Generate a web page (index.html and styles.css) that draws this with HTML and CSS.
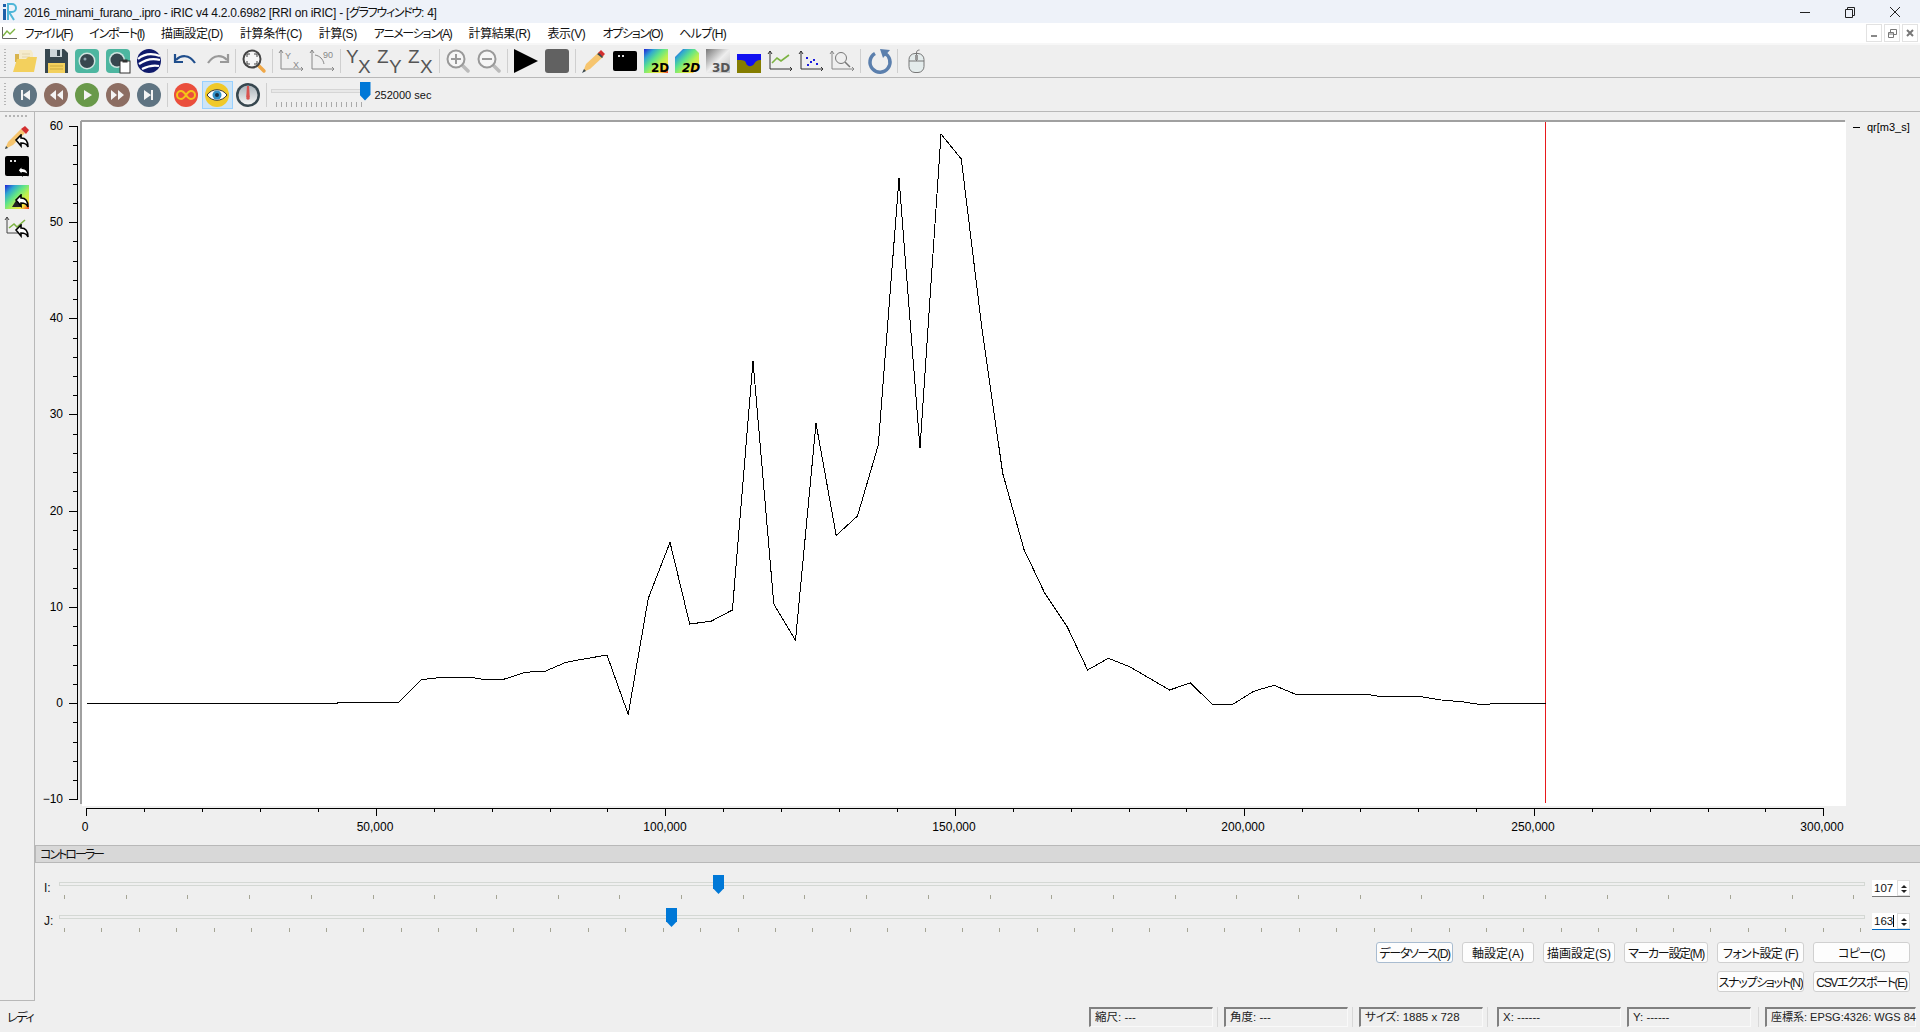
FILE: index.html
```html
<!DOCTYPE html>
<html lang="ja">
<head>
<meta charset="UTF-8">
<title>2016_minami_furano_.ipro - iRIC v4 4.2.0.6982</title>
<link rel="stylesheet" href="styles.css">
</head>
<body>

<svg class="defs" width="0" height="0">
  <symbol id="back" viewBox="0 0 14 14">
    <path d="M1 6 6 1v3c4 0 7 2 7 9-1-3-3-4-7-4v3z" fill="#fff" stroke="#000" stroke-width="1.6"/>
  </symbol>
  <symbol id="glass" viewBox="0 0 24 24">
    <path d="M15 15 22 22" stroke="#bbb" stroke-width="3.5" stroke-linecap="round"/>
    <circle cx="10" cy="10" r="8.5" fill="#f6f6f6" stroke="#999" stroke-width="2"/>
  </symbol>
</svg>

<div class="titlebar">
  <svg class="logo" width="16" height="18" viewBox="0 0 16 18">
    <rect x="1" y="1" width="3" height="3" fill="#1c5fa8"/>
    <rect x="1" y="6" width="3" height="11" fill="#1c5fa8"/>
    <path d="M6 17V1h4a3.500 3.500 0 0 1 0 8H7l5 8" fill="none" stroke="#4fb6d8" stroke-width="2"/>
  </svg>
  <span class="title-text">2016_minami_furano_.ipro - iRIC v4 4.2.0.6982 [RRI on iRIC] - [<span class="kana">グラフウィンドウ</span>: 4]</span>
  <div class="winbtns">
    <svg width="12" height="12" viewBox="0 0 12 12"><path d="M1 6.500H11" stroke="#222"/></svg>
    <svg width="12" height="12" viewBox="0 0 12 12"><path d="M1.500 3.500h7v8h-7zM3.500 3.500v-2h7v8h-2" fill="none" stroke="#222"/></svg>
    <svg width="12" height="12" viewBox="0 0 12 12"><path d="M1 1 11 11M11 1 1 11" stroke="#222"/></svg>
  </div>
</div>

<div class="menubar">
  <svg class="menu-icon" width="16" height="14" viewBox="0 0 16 14">
    <path d="M1.500 1V12.500H16" fill="none" stroke="#666"/>
    <path d="M2 10 6 5l3 3 5-5" fill="none" stroke="#7cb342" stroke-width="1.400"/>
  </svg>
  <span class="menu-item kana">ファイル(F)</span>
  <span class="menu-item kana">インポート(I)</span>
  <span class="menu-item">描画設定(D)</span>
  <span class="menu-item">計算条件(C)</span>
  <span class="menu-item">計算(S)</span>
  <span class="menu-item kana">アニメーション(A)</span>
  <span class="menu-item">計算結果(R)</span>
  <span class="menu-item">表示(V)</span>
  <span class="menu-item kana">オプション(O)</span>
  <span class="menu-item kana-light">ヘルプ(H)</span>
  <div class="mdibtns">
    <span class="mdi"><svg width="8" height="8" viewBox="0 0 8 8"><rect x="1" y="6" width="6" height="2" fill="#888"/></svg></span>
    <span class="mdi"><svg width="9" height="9" viewBox="0 0 9 9"><path d="M.5 3.500h5v5h-5zM2.500 3V.5h6v5H6M.5 5h5" fill="none" stroke="#777"/></svg></span>
    <span class="mdi"><svg width="8" height="8" viewBox="0 0 8 8"><path d="M1 1 7 7M7 1 1 7" stroke="#777" stroke-width="2"/></svg></span>
  </div>
</div>

<div class="toolbar">
  <span class="grip"></span>
  <span class="ic"><svg width="24" height="24" viewBox="0 0 24 24">
    <path d="M2 5h6l2 2h8v6H2z" fill="#d8b44e"/>
    <path d="M6 1h12l2 3v10H6z" fill="#f5ebcb"/>
    <path d="M9 5h8M9 8h8" stroke="#e2d5ab"/>
    <path d="M4 10h9l2-2h9l-3 15H0z" fill="#f3d05d"/>
  </svg></span>
  <span class="ic"><svg width="24" height="24" viewBox="0 0 24 24">
    <path d="M1 0h19l4 4v20H1z" fill="#37474f"/>
    <rect x="6" y="0" width="12" height="8" fill="#cfd8dc"/>
    <rect x="13" y="1" width="3" height="6" fill="#37474f"/>
    <rect x="4" y="14" width="17" height="10" fill="#f3d05d"/>
    <path d="M6 17h13M6 20h13" stroke="#caa93f"/>
  </svg></span>
  <span class="ic"><svg width="24" height="24" viewBox="0 0 24 24">
    <rect width="24" height="24" rx="4" fill="#4db6a0"/>
    <circle cx="12" cy="12" r="8.500" fill="#cfe4e0"/>
    <circle cx="12" cy="12" r="7" fill="#37474f"/>
    <circle cx="10" cy="10" r="1.500" fill="#90a4ae"/>
  </svg></span>
  <span class="ic"><svg width="24" height="24" viewBox="0 0 24 24">
    <rect width="24" height="24" rx="4" fill="#4db6a0"/>
    <circle cx="11" cy="11" r="8" fill="#cfe4e0"/>
    <circle cx="11" cy="11" r="6.500" fill="#37474f"/>
    <rect x="14" y="12" width="10" height="12" fill="#fff" stroke="#333"/>
    <rect x="16.500" y="10.500" width="5" height="3" fill="#333"/>
  </svg></span>
  <span class="ic"><svg width="24" height="24" viewBox="0 0 24 24">
    <circle cx="12" cy="12" r="12" fill="#0f1a6b"/>
    <path d="M1 10C7 5 15 4 23 7M2 15c7-5 14-6 21-4M5 20c6-3 12-4 17-3" fill="none" stroke="#fff" stroke-width="2.200"/>
  </svg></span>
  <span class="sep"></span>
  <span class="ic"><svg width="24" height="24" viewBox="0 0 24 24">
    <path d="M2 11C7 6 15 5 21 14" fill="none" stroke="#1f4e8c" stroke-width="2.200"/>
    <path d="M1 5v8h8" fill="none" stroke="#1f4e8c" stroke-width="2.200"/>
  </svg></span>
  <span class="ic"><svg width="24" height="24" viewBox="0 0 24 24">
    <path d="M22 11C17 6 9 5 3 14" fill="none" stroke="#999" stroke-width="2.200"/>
    <path d="M23 5v8h-8" fill="none" stroke="#999" stroke-width="2.200"/>
  </svg></span>
  <span class="sep"></span>
  <span class="ic"><svg width="24" height="24" viewBox="0 0 24 24">
    <path d="M16 16 22 22" stroke="#f0a848" stroke-width="3.500" stroke-linecap="round"/>
    <circle cx="10" cy="10" r="8.500" fill="#f6f6f6" stroke="#444" stroke-width="2"/>
    <path d="M5 8V5h3M12 5h3v3M15 12v3h-3M8 15H5v-3" fill="none" stroke="#444"/>
  </svg></span>
  <span class="sep"></span>
  <span class="ic"><svg width="26" height="24" viewBox="0 0 26 24">
    <path d="M3 1V20H25M1 4 3 1 5 4M23 18l2 2-2 2" fill="none" stroke="#888"/>
    <text x="7" y="10" class="ico-small">Y</text><text x="15" y="19" class="ico-small">X</text>
  </svg></span>
  <span class="ic"><svg width="26" height="24" viewBox="0 0 26 24">
    <path d="M3 1V20H25M1 4 3 1 5 4M23 18l2 2-2 2" fill="none" stroke="#888"/>
    <path d="M6 6c5 1 8 4 9 9" fill="none" stroke="#888"/>
    <text x="14" y="9" class="ico-small">90</text>
  </svg></span>
  <span class="sep"></span>
  <span class="ic"><svg width="26" height="24" viewBox="0 0 26 24"><text x="0" y="14" class="ico-axis">Y</text><text x="12" y="24" class="ico-axis">X</text></svg></span>
  <span class="ic"><svg width="26" height="24" viewBox="0 0 26 24"><text x="0" y="14" class="ico-axis">Z</text><text x="12" y="24" class="ico-axis">Y</text></svg></span>
  <span class="ic"><svg width="26" height="24" viewBox="0 0 26 24"><text x="0" y="14" class="ico-axis">Z</text><text x="12" y="24" class="ico-axis">X</text></svg></span>
  <span class="sep"></span>
  <span class="ic"><svg width="24" height="24"><use href="#glass"/><path d="M5 10h10M10 5v10" stroke="#999" stroke-width="2"/></svg></span>
  <span class="ic"><svg width="24" height="24"><use href="#glass"/><path d="M5 10h10" stroke="#999" stroke-width="2"/></svg></span>
  <span class="sep"></span>
  <span class="ic"><svg width="24" height="24" viewBox="0 0 24 24"><path d="M0 0 24 12 0 24z" fill="#000"/></svg></span>
  <span class="ic"><svg width="24" height="24" viewBox="0 0 24 24"><rect width="24" height="24" rx="3" fill="#616161"/></svg></span>
  <span class="sep"></span>
  <span class="ic"><svg width="24" height="24" viewBox="0 0 24 24">
    <path d="M1 23 4 15 17 3l5 4L8 20z" fill="#f6c56f"/>
    <path d="M16 4l3-3 4 4-3 3z" fill="#d32f2f"/>
    <path d="M15 5l2-1 4 4-1 1z" fill="#37474f"/>
    <path d="M0 24l2-4 2 2z" fill="#37474f"/>
  </svg></span>
  <span class="ic"><svg width="24" height="20" viewBox="0 0 24 20">
    <rect width="24" height="20" rx="2" fill="#000"/>
    <rect x="5" y="4" width="2" height="2" fill="#ddd"/><rect x="9" y="4" width="2" height="2" fill="#ddd"/>
  </svg></span>
  <span class="ic"><svg width="24" height="24" viewBox="0 0 24 24">
    <defs><linearGradient id="cmap" x1="0" y1="0" x2="1" y2="1">
      <stop offset="0" stop-color="#2020d8"/><stop offset=".22" stop-color="#30a8d0"/><stop offset=".42" stop-color="#60e488"/><stop offset=".62" stop-color="#b8f050"/><stop offset=".82" stop-color="#f8e040"/><stop offset="1" stop-color="#f03020"/>
    </linearGradient></defs>
    <rect width="24" height="24" fill="url(#cmap)"/>
    <text x="7" y="23" class="ico-2d">2D</text>
  </svg></span>
  <span class="ic"><svg width="24" height="24" viewBox="0 0 24 24">
    <path d="M8 0H20L24 4V18L18 24H0V8z" fill="url(#cmap)"/>
    <text x="7" y="23" class="ico-2d ico-ital">2D</text>
  </svg></span>
  <span class="ic"><svg width="24" height="24" viewBox="0 0 24 24">
    <defs><linearGradient id="gray3d" x1="0" y1="0" x2="1" y2="1">
      <stop offset="0" stop-color="#777"/><stop offset=".5" stop-color="#eee"/><stop offset="1" stop-color="#bbb"/>
    </linearGradient></defs>
    <rect width="24" height="24" fill="url(#gray3d)"/>
    <text x="6" y="23" class="ico-2d ico-gray">3D</text>
  </svg></span>
  <span class="ic"><svg width="24" height="24" viewBox="0 0 24 24">
    <rect y="5" width="24" height="19" fill="#857d00"/>
    <path d="M0 5H24V11C20 11 19 12 17 15c-2 3-7 3-8-1C8 11 6 11 0 11z" fill="#1010f0"/>
  </svg></span>
  <span class="ic"><svg width="24" height="24" viewBox="0 0 24 24">
    <path d="M2 2V20H24M0 5 2 2 4 5M22 18l2 2-2 2" fill="none" stroke="#333"/>
    <path d="M4 14 9 9l4 3 8-6" fill="none" stroke="#7cb342" stroke-width="1.600"/>
  </svg></span>
  <span class="ic"><svg width="24" height="24" viewBox="0 0 24 24">
    <path d="M2 2V20H24M0 5 2 2 4 5M22 18l2 2-2 2" fill="none" stroke="#333"/>
    <path d="M7 8h2v2H7zM11 12h2v2h-2zM14 10h2v2h-2zM17 14h2v2h-2zM8 15h2v2H8z" fill="#1a1ae0"/>
  </svg></span>
  <span class="ic"><svg width="24" height="24" viewBox="0 0 24 24">
    <path d="M2 2V20H24M0 5 2 2 4 5M22 18l2 2-2 2" fill="none" stroke="#888"/>
    <circle cx="11" cy="9" r="5.500" fill="none" stroke="#777"/>
    <path d="M15 13l5 5" stroke="#777" stroke-width="1.500"/>
  </svg></span>
  <span class="sep"></span>
  <span class="ic"><svg width="24" height="24" viewBox="0 0 24 24">
    <path d="M8 4.500A10 10 0 1 0 17 4" fill="none" stroke="#5b7fad" stroke-width="3.500"/>
    <path d="M13 0 23 1 16 9z" fill="#5b7fad"/>
  </svg></span>
  <span class="sep"></span>
  <span class="ic"><svg width="24" height="24" viewBox="0 0 24 24">
    <rect x="5" y="4.500" width="15" height="19" rx="6" fill="#e4ecec" stroke="#777"/>
    <path d="M5 12H20M12.500 4.500V12" stroke="#777"/>
    <rect x="11" y="6" width="3" height="5" fill="#999"/>
    <path d="M12.500 4c0-2 1-3 3-3" fill="none" stroke="#777"/>
  </svg></span>
</div>

<div class="toolbar toolbar-play">
  <span class="grip"></span>
  <span class="ic"><svg width="24" height="24" viewBox="0 0 24 24"><circle cx="12" cy="12" r="12" fill="#5f7482"/><path d="M8 7h2v10H8zM17 7v10l-7-5z" fill="#f4f4f4"/></svg></span>
  <span class="ic"><svg width="24" height="24" viewBox="0 0 24 24"><circle cx="12" cy="12" r="12" fill="#8d6e63"/><path d="M12 7v10l-6-5zM19 7v10l-6-5z" fill="#f4f4f4"/></svg></span>
  <span class="ic"><svg width="24" height="24" viewBox="0 0 24 24"><circle cx="12" cy="12" r="12" fill="#69994a"/><path d="M9 7 17 12 9 17z" fill="#f4f4f4"/></svg></span>
  <span class="ic"><svg width="24" height="24" viewBox="0 0 24 24"><circle cx="12" cy="12" r="12" fill="#8d6e63"/><path d="M5 7v10l6-5zM12 7v10l6-5z" fill="#f4f4f4"/></svg></span>
  <span class="ic"><svg width="24" height="24" viewBox="0 0 24 24"><circle cx="12" cy="12" r="12" fill="#5f7482"/><path d="M14 7h2v10h-2zM7 7v10l7-5z" fill="#f4f4f4"/></svg></span>
  <span class="sep"></span>
  <span class="ic"><svg width="24" height="24" viewBox="0 0 24 24"><circle cx="12" cy="12" r="12" fill="#ea4e3c"/><path d="M12 12c-2-3-3.500-4-5-4a4 4 0 0 0 0 8c1.500 0 3-1 5-4s3.500-4 5-4a4 4 0 0 1 0 8c-1.500 0-3-1-5-4z" fill="none" stroke="#f5c518" stroke-width="2"/></svg></span>
  <span class="ic ic-on"><svg width="24" height="24" viewBox="0 0 24 24"><circle cx="12" cy="12" r="12" fill="#f0c929"/><path d="M2 12c5-7 15-7 20 0-5 7-15 7-20 0z" fill="#fff" stroke="#333"/><circle cx="12" cy="12" r="4.500" fill="#2f8fc8"/><circle cx="12" cy="12" r="2" fill="#15324a"/></svg></span>
  <span class="ic"><svg width="24" height="24" viewBox="0 0 24 24">
    <defs><linearGradient id="face" x1="0" y1="0" x2="0" y2="1"><stop offset="0" stop-color="#aab4ba"/><stop offset="1" stop-color="#f5f5f5"/></linearGradient></defs>
    <circle cx="12" cy="12" r="12" fill="#37474f"/><circle cx="12" cy="12" r="9.500" fill="url(#face)"/>
    <path d="M11 3h2l.8 11h-3.600z" fill="#d9534f"/><circle cx="12" cy="15" r="1.800" fill="#d9534f"/>
  </svg></span>
  <span class="sep"></span>
  <div class="time-slider">
    <span class="time-groove"></span>
    <span class="time-ticks"></span>
    <span class="handle handle-time"></span>
  </div>
  <span class="time-text">252000 sec</span>
</div>

<div class="main">
  <div class="dock">
    <span class="dock-grip"></span>
    <span class="dock-ic"><svg width="24" height="24" viewBox="0 0 24 24">
      <path d="M0 24 3 17 16 4l4 4L8 20z" fill="#f6c56f"/><path d="M16 4l4-3 4 4-3 4z" fill="#d32f2f"/><path d="M0 24l1-3 2 2z" fill="#37474f"/>
      <use href="#back" x="10" y="9" width="14" height="14"/>
    </svg></span>
    <span class="dock-ic"><svg width="24" height="22" viewBox="0 0 24 22">
      <rect width="24" height="20" rx="2" fill="#000"/><rect x="5" y="4" width="2" height="2" fill="#ddd"/><rect x="9" y="4" width="2" height="2" fill="#ddd"/>
      <use href="#back" x="12" y="9" width="12" height="12"/>
    </svg></span>
    <span class="dock-ic"><svg width="24" height="24" viewBox="0 0 24 24">
      <rect width="24" height="24" fill="url(#cmap)"/>
      <path d="M7 22 12 14l5 8z" fill="#222"/>
      <use href="#back" x="10" y="9" width="14" height="14"/>
    </svg></span>
    <span class="dock-ic"><svg width="24" height="22" viewBox="0 0 24 22">
      <path d="M2 1V17H16M0 4 2 1 4 4" fill="none" stroke="#444"/><path d="M4 12 9 8l3 3 8-7" fill="none" stroke="#7cb342" stroke-width="1.600"/>
      <use href="#back" x="10" y="8" width="14" height="14"/>
    </svg></span>
  </div>

  <div class="content">
    <svg class="chart" width="1885" height="733" viewBox="35 112 1885 733">
      <rect x="82" y="122" width="1764" height="684" fill="#fff"/>
      <g shape-rendering="crispEdges" fill="none">
        <path d="M81 120.500V804M81 121H1845" stroke="#a0a0a0" stroke-width="2"/>
        <!-- y axis -->
        <path d="M77.500 126V799.500M69 126H77M69 222H77M69 318H77M69 414H77M69 511H77M69 607H77M69 703H77M69 799H77" stroke="#000"/>
        <path d="M73 145H77M73 164H77M73 184H77M73 203H77M73 241H77M73 261H77M73 280H77M73 299H77M73 338H77M73 357H77M73 376H77M73 395H77M73 434H77M73 453H77M73 472H77M73 491H77M73 530H77M73 549H77M73 568H77M73 588H77M73 626H77M73 645H77M73 665H77M73 684H77M73 722H77M73 742H77M73 761H77M73 780H77" stroke="#000"/>
        <!-- x axis -->
        <path d="M86 808.500H1824M86.500 808V816M376.500 808V816M665.500 808V816M955.500 808V816M1244.500 808V816M1534.500 808V816M1823.500 808V816" stroke="#000"/>
        <path d="M144.500 808V812M202.500 808V812M260.500 808V812M318.500 808V812M434.500 808V812M492.500 808V812M550.500 808V812M607.500 808V812M723.500 808V812M781.500 808V812M839.500 808V812M897.500 808V812M1013.500 808V812M1071.500 808V812M1129.500 808V812M1186.500 808V812M1302.500 808V812M1360.500 808V812M1418.500 808V812M1476.500 808V812M1592.500 808V812M1650.500 808V812M1708.500 808V812M1765.500 808V812" stroke="#000"/>
        <path d="M1545.500 122V803" stroke="#e8191c"/>
        <path d="M1853 127.500H1860" stroke="#000"/>
        <polyline stroke="#000" points="86.500,703.300 337.500,703.300 337.500,702.300 398.800,702.300 421.200,679.700 441.600,677.300 471.400,677.300 482.400,679.300 503.700,679.300 525.300,672.300 545.700,671 566,662.300 578.400,660 607,655 628.200,714.300 648.300,598.300 670,542.300 689.700,624 711,621.300 732.400,610 753,361 773.800,604 795.500,640.300 816,423.300 836.200,535.500 857.500,516 878.300,445 899,178.300 920,448.300 941,134 961.300,159 981.700,326.700 1002.700,473.300 1024,549.500 1044.800,593.300 1067.200,626.700 1087.600,670 1108.300,658.300 1129.600,666.700 1169.500,690 1190.400,683 1212.300,704.300 1232.200,704.700 1253.700,691.300 1274,685.300 1295.500,694.300 1367.400,694.300 1378.700,696.300 1419,696.300 1441.400,700 1461.800,701.700 1483.300,705 1494.500,703.300 1545.500,703.300"/>
      </g>
      <g class="ylabels">
        <text x="63" y="130">60</text>
        <text x="63" y="226">50</text>
        <text x="63" y="322">40</text>
        <text x="63" y="418">30</text>
        <text x="63" y="515">20</text>
        <text x="63" y="611">10</text>
        <text x="63" y="707">0</text>
        <text x="63" y="803">−10</text>
      </g>
      <g class="xlabels">
        <text x="85" y="831">0</text>
        <text x="375" y="831">50,000</text>
        <text x="665" y="831">100,000</text>
        <text x="954" y="831">150,000</text>
        <text x="1243" y="831">200,000</text>
        <text x="1533" y="831">250,000</text>
        <text x="1822" y="831">300,000</text>
      </g>
      <text class="legend" x="1867" y="131">qr[m3_s]</text>
    </svg>

    <div class="controller">
      <div class="ctrl-head">コントローラー</div>
      <div class="ctrl-row">
        <span class="ctrl-label">I:</span>
        <div class="slider">
          <div class="groove"></div>
          <div class="ticks ticks-i"></div>
          <span class="handle" style="left:654px"></span>
        </div>
        <div class="spin"><span class="spin-val">107</span><span class="spin-arrows"><i class="up"></i><i class="down"></i></span></div>
      </div>
      <div class="ctrl-row">
        <span class="ctrl-label">J:</span>
        <div class="slider">
          <div class="groove"></div>
          <div class="ticks ticks-j"></div>
          <span class="handle" style="left:607px"></span>
        </div>
        <div class="spin spin-focus"><span class="spin-val"><span class="caret">163</span></span><span class="spin-arrows"><i class="up"></i><i class="down"></i></span></div>
      </div>
      <div class="btn-grid">
        <button class="btn btn-default kana">データソース(D)</button>
        <button class="btn">軸設定(A)</button>
        <button class="btn">描画設定(S)</button>
        <button class="btn kana">マーカー設定(M)</button>
        <button class="btn kana-light">フォント設定 (F)</button>
        <button class="btn kana-light">コピー(C)</button>
        <button class="btn btn-col5 kana">スナップショット(N)</button>
        <button class="btn kana">CSVエクスポート(E)</button>
      </div>
    </div>
  </div>
</div>

<div class="statusbar">
  <span class="ready kana">レディ</span>
  <span class="sbox">縮尺: ---</span>
  <span class="sb-sep"></span>
  <span class="sbox">角度: ---</span>
  <span class="sb-sep"></span>
  <span class="sbox">サイズ: 1885 x 728</span>
  <span class="sb-sep sb-sep-x"></span>
  <span class="sbox">X: ------</span>
  <span class="sbox sbox-y">Y: ------</span>
  <span class="sb-sep sb-sep-crs"></span>
  <span class="sbox sbox-crs">座標系: EPSG:4326: WGS 84</span>
</div>

</body>
</html>
```
FILE: styles.css
```css
* {
  box-sizing: border-box;
  font-feature-settings: "palt";
}
html, body {
  margin: 0;
  padding: 0;
}
body {
  width: 1920px;
  height: 1032px;
  overflow: hidden;
  display: flex;
  flex-direction: column;
  background-color: #efefef;
  color: #111;
  font-family: "Liberation Sans", "Noto Sans CJK JP", sans-serif;
  font-size: 12px;
}
svg {
  display: block;
  overflow: visible;
}
.defs {
  position: absolute;
}

/* title and menu */
.titlebar {
  height: 23px;
  display: flex;
  align-items: center;
  background-color: #eef2f9;
  padding-left: 2px;
}
.title-text {
  margin-left: 6px;
  font-size: 12px;
  letter-spacing: -0.25px;
}
.winbtns {
  margin-left: auto;
  display: flex;
  gap: 33px;
  padding-right: 19px;
}
.menubar {
  height: 22px;
  display: flex;
  align-items: center;
  background-color: #fff;
  border-bottom: 2px solid #f7f7f7;
  padding-left: 1px;
}
.menu-icon {
  margin-right: -1px;
}
.menu-item {
  padding: 0 8.5px 2px;
  white-space: nowrap;
  letter-spacing: -0.4px;
}
.mdibtns {
  margin-left: auto;
  display: flex;
  gap: 2px;
  padding-right: 2px;
}
.mdi {
  width: 16px;
  height: 18px;
  display: flex;
  align-items: center;
  justify-content: center;
  border: 1px solid #e2e2e2;
}
/* the kana in the source font run narrower than Noto's */
.kana,
.title-text .kana {
  letter-spacing: -1.3px;
}
.kana-light {
  letter-spacing: -0.7px;
}

/* toolbars */
.toolbar {
  height: 33px;
  display: flex;
  align-items: center;
  padding-left: 4px;
  border-bottom: 1px solid #b8b8b8;
}
.toolbar-play {
  height: 34px;
}
.grip {
  width: 2px;
  height: 24px;
  margin-right: 3.5px;
  background-image: repeating-linear-gradient(180deg, #b5b5b5 0 1px, transparent 1px 3px);
}
.ic {
  width: 31px;
  height: 28px;
  flex: none;
  display: flex;
  align-items: center;
  justify-content: center;
}
.ic-on {
  background-color: #cce4f7;
  border: 1px solid #99d1ff;
}
.sep {
  width: 6px;
  height: 24px;
  flex: none;
  background: linear-gradient(#cfcfcf, #cfcfcf) center / 1px 100% no-repeat;
}
.ico-small {
  font: 9px "Liberation Sans", sans-serif;
  fill: #888;
}
.ico-axis {
  font: 19px "Liberation Sans", sans-serif;
  fill: #555;
}
.ico-2d {
  font: bold 12px "DejaVu Sans", sans-serif;
  fill: #000;
}
.ico-ital {
  font-style: italic;
}
.ico-gray {
  fill: #555;
}

/* time slider */
.time-slider {
  position: relative;
  width: 100px;
  height: 26px;
  margin-left: 1px;
}
.time-groove {
  display: block;
  width: 93px;
  height: 4px;
  margin-top: 7px;
  background-color: #e8e8e8;
  border: 1px solid #d5d5d5;
}
.time-ticks {
  display: block;
  width: 90px;
  height: 5px;
  margin: 9px 0 0 5px;
  background-image: repeating-linear-gradient(90deg, #aaa 0 1px, transparent 1px 5px);
}
.time-text {
  margin-left: 4px;
  font: 11px "Liberation Sans", sans-serif;
}
.handle {
  position: absolute;
  top: 3px;
  width: 11px;
  height: 19px;
  background-color: #0078d7;
  clip-path: polygon(0 0, 100% 0, 100% 70%, 50% 100%, 0 70%);
}
.handle-time {
  left: 89px;
  top: 0;
}

/* main area */
.main {
  flex: 1;
  display: flex;
  min-height: 0;
}
.dock {
  width: 35px;
  flex: none;
  border-right: 1px solid #b8b8b8;
  border-bottom: 1px solid #b8b8b8;
  display: flex;
  flex-direction: column;
  align-items: center;
  padding-right: 1px;
}
.dock-grip {
  width: 24px;
  height: 2px;
  margin: 3px 0 5px;
  background-image: repeating-linear-gradient(90deg, #b5b5b5 0 2px, transparent 2px 4px);
}
.dock-ic {
  height: 30px;
  display: flex;
  align-items: center;
}
.content {
  flex: 1;
  min-width: 0;
  display: flex;
  flex-direction: column;
}
.chart text {
  font-family: "Liberation Sans", sans-serif;
  font-size: 12px;
  fill: #000;
}
.ylabels text {
  text-anchor: end;
}
.xlabels text {
  text-anchor: middle;
}
.chart .legend {
  font-size: 11px;
}

/* controller dock */
.ctrl-head {
  height: 18px;
  line-height: 19px;
  padding-left: 4px;
  font-size: 12px;
  letter-spacing: -2px;
  background-color: #d8d8d8;
  border: 1px solid #b8b8b8;
  border-width: 1px 0 1px 1px;
  margin-bottom: 9px;
}
.ctrl-row {
  height: 33px;
  display: flex;
  padding-right: 10px;
}
.ctrl-label {
  width: 24px;
  flex: none;
  padding: 6px 0 0 9px;
  font-size: 12px;
  line-height: 20px;
}
.slider {
  position: relative;
  flex: 1;
}
.groove {
  height: 4px;
  margin-top: 10px;
  background-color: #efefef;
  border: 1px solid #d4d8d4;
}
.ticks {
  height: 4px;
  margin: 9px 0 0 5px;
}
.ticks-i {
  width: 1791px;
  background-image: repeating-linear-gradient(90deg, #a5a595 0 1px, transparent 1px 61.7px);
}
.ticks-j {
  width: 1797px;
  margin-top: 9px;
  background-image: repeating-linear-gradient(90deg, #a5a595 0 1px, transparent 1px 37.42px);
}
.spin {
  width: 38px;
  height: 17px;
  margin: 8px 0 0 7px;
  display: flex;
  justify-content: space-between;
  background-color: #fff;
  border-bottom: 1px solid #777;
  font-size: 11.5px;
  line-height: 16px;
}
.spin-focus {
  border-bottom: 1px solid #0067c0;
}
.spin-val {
  padding-left: 2px;
}
.caret {
  border-right: 1px solid #000;
}
.spin-arrows {
  width: 13px;
  display: flex;
  flex-direction: column;
  border: 1px solid #ddd;
}
.spin-arrows i {
  flex: 1;
  display: block;
  margin: 2px auto 0;
  width: 0;
  height: 0;
  border: 3px solid transparent;
  border-top: 0;
  border-bottom: 3px solid #222;
}
.spin-arrows i.down {
  border-top: 3px solid #222;
  border-bottom: 0;
}
.btn-grid {
  display: grid;
  grid-template-columns: 77px 72px 72px 84px 87px 97px;
  grid-auto-rows: 21px;
  gap: 8px 9px;
  justify-content: end;
  padding: 4px 10px 0 0;
}
.btn {
  padding: 0;
  font-family: "Liberation Sans", "Noto Sans CJK JP", sans-serif;
  font-size: 12px;
  color: #111;
  background-color: #fdfdfd;
  border: 1px solid #d0d0d0;
  border-radius: 3px;
  white-space: nowrap;
  overflow: hidden;
}
.btn-default {
  border-color: #a9bcd0;
}
.btn-col5 {
  grid-column: 5;
}

/* status bar */
.statusbar {
  height: 31px;
  display: flex;
  padding: 6px 4px 0 0;
}
.ready {
  flex: 1;
  padding-left: 7px;
  line-height: 22px;
  font-size: 12px;
}
.sbox {
  width: 124px;
  height: 20px;
  padding-left: 4px;
  line-height: 16px;
  font-size: 11.5px;
  color: #222;
  white-space: nowrap;
  border: 1px solid #f9f9f9;
  border-top: 2px solid #808080;
  border-left: 2px solid #808080;
}
.sbox-y {
  margin-left: 6px;
}
.sbox-crs {
  width: 151px;
  font-size: 11px;
}
.sb-sep {
  width: 1px;
  height: 20px;
  margin: 0 6px 0 4px;
  background-color: #d8d8d8;
}
.sb-sep-x {
  margin-right: 9px;
}
.sb-sep-crs {
  margin: 0 6px 0 7px;
}
```
